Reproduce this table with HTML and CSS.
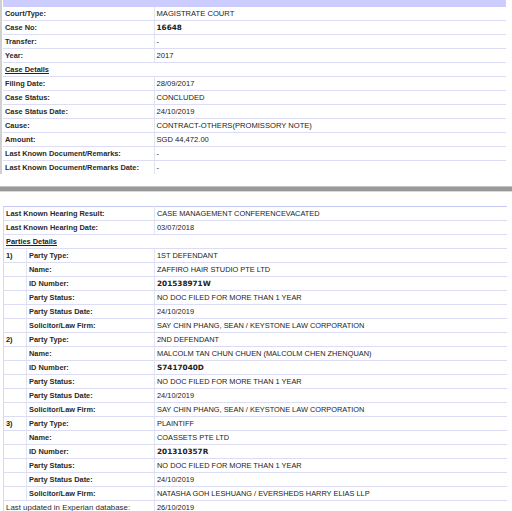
FILE: index.html
```html
<!DOCTYPE html>
<html>
<head>
<meta charset="utf-8">
<link rel="stylesheet" href="styles.css">
</head>
<body>
<div class="top">
  <div class="band"></div>
  <table class="grid first">
    <colgroup><col class="c-label"><col class="c-value"></colgroup>
    <tr><td class="lbl">Court/Type:</td><td class="val">MAGISTRATE COURT</td></tr>
    <tr><td class="lbl">Case No:</td><td class="val id">16648</td></tr>
    <tr><td class="lbl">Transfer:</td><td class="val">-</td></tr>
    <tr><td class="lbl">Year:</td><td class="val">2017</td></tr>
    <tr><td class="sec" colspan="2"><span>Case Details</span></td></tr>
    <tr><td class="lbl">Filing Date:</td><td class="val">28/09/2017</td></tr>
    <tr><td class="lbl">Case Status:</td><td class="val">CONCLUDED</td></tr>
    <tr><td class="lbl">Case Status Date:</td><td class="val">24/10/2019</td></tr>
    <tr><td class="lbl">Cause:</td><td class="val">CONTRACT-OTHERS(PROMISSORY NOTE)</td></tr>
    <tr><td class="lbl">Amount:</td><td class="val">SGD 44,472.00</td></tr>
    <tr><td class="lbl">Last Known Document/Remarks:</td><td class="val">-</td></tr>
    <tr class="last"><td class="lbl">Last Known Document/Remarks Date:</td><td class="val">-</td></tr>
  </table>
</div>
<div class="divider"></div>
<table class="grid second">
  <colgroup><col class="c-num"><col class="c-lbl2"><col class="c-value"></colgroup>
  <tr><td class="lbl" colspan="2">Last Known Hearing Result:</td><td class="val">CASE MANAGEMENT CONFERENCEVACATED</td></tr>
  <tr><td class="lbl" colspan="2">Last Known Hearing Date:</td><td class="val">03/07/2018</td></tr>
  <tr><td class="sec" colspan="3"><span>Parties Details</span></td></tr>

  <tr><td class="num">1)</td><td class="lbl">Party Type:</td><td class="val">1ST DEFENDANT</td></tr>
  <tr><td class="num"></td><td class="lbl">Name:</td><td class="val">ZAFFIRO HAIR STUDIO PTE LTD</td></tr>
  <tr><td class="num"></td><td class="lbl">ID Number:</td><td class="val id">201538971W</td></tr>
  <tr><td class="num"></td><td class="lbl">Party Status:</td><td class="val">NO DOC FILED FOR MORE THAN 1 YEAR</td></tr>
  <tr><td class="num"></td><td class="lbl">Party Status Date:</td><td class="val">24/10/2019</td></tr>
  <tr><td class="num"></td><td class="lbl">Solicitor/Law Firm:</td><td class="val">SAY CHIN PHANG, SEAN / KEYSTONE LAW CORPORATION</td></tr>

  <tr><td class="num">2)</td><td class="lbl">Party Type:</td><td class="val">2ND DEFENDANT</td></tr>
  <tr><td class="num"></td><td class="lbl">Name:</td><td class="val">MALCOLM TAN CHUN CHUEN (MALCOLM CHEN ZHENQUAN)</td></tr>
  <tr><td class="num"></td><td class="lbl">ID Number:</td><td class="val id">S7417040D</td></tr>
  <tr><td class="num"></td><td class="lbl">Party Status:</td><td class="val">NO DOC FILED FOR MORE THAN 1 YEAR</td></tr>
  <tr><td class="num"></td><td class="lbl">Party Status Date:</td><td class="val">24/10/2019</td></tr>
  <tr><td class="num"></td><td class="lbl">Solicitor/Law Firm:</td><td class="val">SAY CHIN PHANG, SEAN / KEYSTONE LAW CORPORATION</td></tr>

  <tr><td class="num">3)</td><td class="lbl">Party Type:</td><td class="val">PLAINTIFF</td></tr>
  <tr><td class="num"></td><td class="lbl">Name:</td><td class="val">COASSETS PTE LTD</td></tr>
  <tr><td class="num"></td><td class="lbl">ID Number:</td><td class="val id">201310357R</td></tr>
  <tr><td class="num"></td><td class="lbl">Party Status:</td><td class="val">NO DOC FILED FOR MORE THAN 1 YEAR</td></tr>
  <tr><td class="num"></td><td class="lbl">Party Status Date:</td><td class="val">24/10/2019</td></tr>
  <tr><td class="num"></td><td class="lbl">Solicitor/Law Firm:</td><td class="val">NATASHA GOH LESHUANG / EVERSHEDS HARRY ELIAS LLP</td></tr>

  <tr><td class="lbl plain" colspan="2">Last updated in Experian database:</td><td class="val">26/10/2019</td></tr>
</table>
</body>
</html>
```

FILE: styles.css
```css
html, body {
  margin: 0;
  padding: 0;
  background: #ffffff;
}

body {
  font-family: "Liberation Sans", Arial, sans-serif;
  font-size: 7.4px;
  color: #222222;
  overflow: hidden;
  width: 512px;
  height: 511px;
}

.top {
  border-left: 2px solid #d0d0d0;
  padding-left: 1px;
  height: 174px;
  overflow: hidden;
  box-sizing: border-box;
}

.band {
  width: 503px;
  height: 7px;
  background: #ccccff;
}

.grid {
  border-collapse: collapse;
  table-layout: fixed;
  width: 503px;
}

.grid td {
  height: 13px;
  padding: 0 0 0 2px;
  border-bottom: 1px solid #dcdcf4;
  white-space: nowrap;
  overflow: hidden;
  line-height: 13px;
  vertical-align: middle;
}

.c-label { width: 151px; }
.c-value { width: 352px; }
.c-num { width: 23px; }
.c-lbl2 { width: 128px; }

.lbl {
  font-weight: bold;
  color: #2a2a2a;
  padding-left: 1px;
}

.lbl.plain {
  font-weight: normal;
  font-size: 7.9px;
}

.val {
  color: #222222;
  border-left: 1px solid #e4e4f0;
}

.first .val {
  font-size: 7.6px;
}

.val.id,
.first .val.id {
  font-family: "DejaVu Sans", Verdana, sans-serif;
  font-weight: bold;
  font-size: 7.3px;
}

.sec span {
  font-weight: bold;
  text-decoration: underline;
}

.num {
  font-weight: bold;
  border-right: 1px solid #e4e4f0;
}

.divider {
  margin-top: 12px;
  height: 4px;
  background: #9a9a9a;
  border-top: 1px solid #c4c4c4;
  border-bottom: 1px solid #d8d8d8;
}

.second {
  margin-top: 14px;
  margin-left: 3px;
  border-top: 1px solid #c8c8f4;
  border-left: 1px solid #d8d8e8;
}
```
